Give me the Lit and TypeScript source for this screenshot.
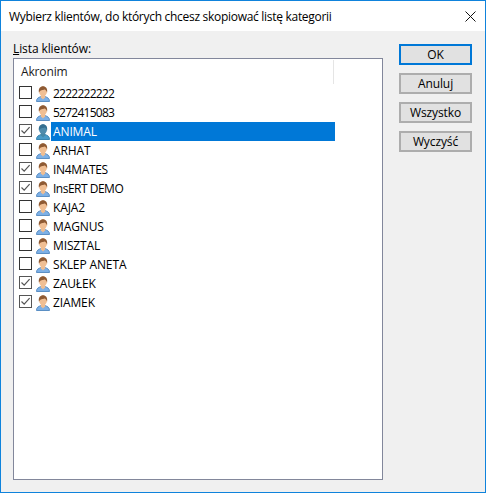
import { LitElement, html, css, svg } from "lit";
import { customElement } from "lit/decorators.js";

const rows: [string, boolean, string][] = [
  ["2222222222", false, "digits"],
  ["5272415083", false, "digits"],
  ["ANIMAL", true, ""],
  ["ARHAT", false, ""],
  ["IN4MATES", true, "tight"],
  ["InsERT DEMO", true, "tighter"],
  ["KAJA2", false, ""],
  ["MAGNUS", false, ""],
  ["MISZTAL", false, ""],
  ["SKLEP ANETA", false, ""],
  ["ZAUŁEK", true, ""],
  ["ZIAMEK", true, ""],
];

const person = (sel: boolean) => svg`<svg class="icon" width="16" height="16" viewBox="0 0 16 16">
  <path d="M1.5 15.5 C1.5 12.2 3.6 11.4 6 10.6 L10 10.6 C12.4 11.4 14.5 12.2 14.5 15.5 Z" fill="${sel ? "#4a9cc8" : "#7db0e6"}" stroke="${sel ? "#3a86b0" : "#5b8fc4"}" stroke-width="1"/>
  <path d="M5.8 8.5 L5.8 11.2 L8 13.4 L10.2 11.2 L10.2 8.5 Z" fill="${sel ? "#4788a6" : "#eebd92"}"/>
  <ellipse cx="8" cy="5.4" rx="4" ry="4.8" fill="${sel ? "#4f8cac" : "#f0bf94"}"/>
  <path d="M3.9 6.6 C3.2 2.4 5.4 0.3 8 0.3 C10.6 0.3 12.8 2.4 12.1 6.6 C11.5 4.6 10.6 3.8 9.4 3.5 C7.8 4.2 5.4 3.8 3.9 6.6 Z" fill="${sel ? "#356f90" : "#8e5a33"}"/>
</svg>`;

@customElement("app-root")
export class AppRoot extends LitElement {
  static styles = css`
    :host {
      display: block;
      width: 486px;
      height: 493px;
      font-family: "Open Sans", "Noto Sans", sans-serif;
      font-size: 12px;
      color: #000;
    }
    .window {
      box-sizing: border-box;
      width: 486px;
      height: 493px;
      border: 1px solid #0f83dc;
      background: #f0f0f0;
      display: flex;
      flex-direction: column;
    }
    .title {
      height: 30px;
      background: #fff;
      display: flex;
      align-items: center;
      justify-content: space-between;
      padding: 0 9px 0 8px;
      flex: none;
      letter-spacing: -0.29px;
    }
    .close { display: block; }
    .body {
      flex: 1;
      display: flex;
      padding: 13px 13px 12px 12px;
      gap: 16px;
      min-height: 0;
    }
    .left {
      width: 370px;
      flex: none;
      display: flex;
      flex-direction: column;
    }
    .label {
      height: 14px;
      line-height: 10px;
      letter-spacing: -0.1px;
    }
    .label u { text-decoration-thickness: 1px; }
    .list {
      flex: 1;
      box-sizing: border-box;
      background: #fff;
      border: 1px solid #82879b;
      padding: 1px 0 0 0;
    }
    .head {
      width: 320px;
      height: 24px;
      box-sizing: border-box;
      border-right: 1px solid #e5e5e5;
      padding-left: 7px;
      line-height: 24px;
      letter-spacing: -0.15px;
      color: #1a1a1a;
    }
    .row {
      height: 19px;
      display: flex;
      align-items: center;
      padding-left: 5px;
      width: 316px;
    }
    .cb {
      box-sizing: border-box;
      width: 13px;
      height: 13px;
      border: 1px solid #333;
      background: #fff;
      flex: none;
      margin-right: 3px;
      margin-bottom: 2px;
      display: block;
    }
    .cb.on { border-color: #555; }
    .cb svg { display: block; }
    .icon { flex: none; display: block; }
    .name {
      flex: 1;
      height: 19px;
      line-height: 19px;
      padding-left: 2px;
      margin-left: 0;
      letter-spacing: -0.12px;
      white-space: nowrap;
    }
    .name.digits { letter-spacing: -0.75px; }
    .name.tight { letter-spacing: -0.35px; }
    .name.tighter { letter-spacing: -0.5px; }
    .row.sel .name { background: #0078d7; color: #fff; }
    .buttons {
      display: flex;
      flex-direction: column;
      gap: 8px;
      width: 73px;
      flex: none;
    }
    button {
      width: 73px;
      height: 21px;
      box-sizing: border-box;
      padding: 0;
      margin: 0;
      border: 2px solid #adadad;
      background: #e1e1e1;
      font: inherit;
      color: #000;
      line-height: 16px;
      letter-spacing: -0.1px;
    }
    button.def {
      border-color: #0078d7;
    }
  `;

  render() {
    return html`<div class="window">
      <div class="title">
        <span>Wybierz klientów, do których chcesz skopiować listę kategorii</span>
        <svg class="close" width="11" height="11" viewBox="0 0 11 11">
          <path d="M0.5 0.5 L10.5 10.5 M10.5 0.5 L0.5 10.5" stroke="#111" stroke-width="1" fill="none"/>
        </svg>
      </div>
      <div class="body">
        <div class="left">
          <div class="label"><u>L</u>ista klientów:</div>
          <div class="list">
            <div class="head">Akronim</div>
            ${rows.map(
              ([n, c, cls], i) => html`<div class="row ${i === 2 ? "sel" : ""}">
                <span class="cb ${c ? "on" : ""}">
                  ${c
                    ? html`<svg width="11" height="11" viewBox="0 0 11 11"><path d="M1.5 5.5 L4.2 8.2 L9.6 2.2" stroke="#555" stroke-width="1.2" fill="none"/></svg>`
                    : ""}
                </span>
                ${person(i === 2)}
                <span class="name ${cls}">${n}</span>
              </div>`
            )}
          </div>
        </div>
        <div class="buttons">
          <button class="def">OK</button>
          <button>Anuluj</button>
          <button>Wszystko</button>
          <button>Wyczyść</button>
        </div>
      </div>
    </div>`;
  }
}
